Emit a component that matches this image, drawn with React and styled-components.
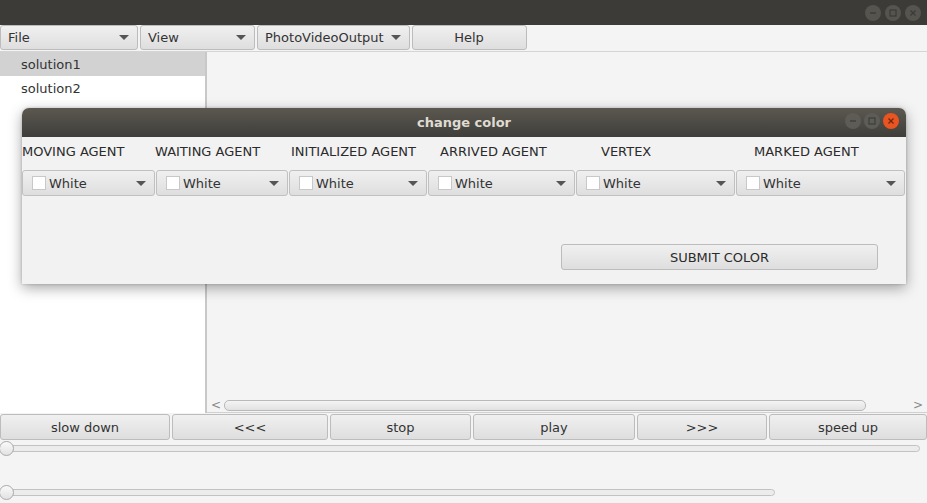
import React from "react";
import styled, { createGlobalStyle } from "styled-components";

const GlobalStyle = createGlobalStyle`
  html, body {
    margin: 0;
    padding: 0;
    overflow: hidden;
    background: #f4f4f4;
  }
  * { box-sizing: border-box; }
`;

const Window = styled.div`
  position: relative;
  width: 927px;
  height: 503px;
  display: flex;
  flex-direction: column;
  background: #f4f4f4;
  font-family: "DejaVu Sans", "Noto Sans", sans-serif;
  font-size: 13px;
  color: #333;
`;

const TitleBar = styled.div`
  height: 25px;
  flex: 0 0 25px;
  background: #3c3b37;
  display: flex;
  justify-content: flex-end;
  align-items: center;
  gap: 4px;
  padding-right: 6px;
`;

const CtrlBtn = styled.div`
  width: 16px;
  height: 16px;
  border-radius: 50%;
  background: ${(p) => (p.$close ? "#e95420" : p.$bg || "#5d5c57")};
  display: flex;
  align-items: center;
  justify-content: center;
`;

const MenuBar = styled.div`
  height: 27px;
  flex: 0 0 27px;
  display: flex;
  align-items: flex-end;
  gap: 2px;
  border-bottom: 1px solid #d4d4d4;
  padding-bottom: 1px;
`;

const MenuButton = styled.div`
  width: ${(p) => p.$w}px;
  height: 25px;
  display: flex;
  align-items: center;
  justify-content: ${(p) => (p.$center ? "center" : "space-between")};
  padding: 0 8px 0 7px;
  border: 1px solid #bcbcbc;
  border-radius: 3px;
  background: linear-gradient(#f0f0f0, #dedede);
  color: #333;
`;

const Arrow = styled.span`
  width: 0;
  height: 0;
  border-left: 5px solid transparent;
  border-right: 5px solid transparent;
  border-top: 5px solid #555;
`;

const Main = styled.div`
  flex: 0 0 361px;
  display: flex;
`;

const ListPane = styled.div`
  width: 207px;
  background: #fff;
  border-right: 2px solid #c8c8c8;
  display: flex;
  flex-direction: column;
`;

const ListItem = styled.div`
  height: 24px;
  display: flex;
  align-items: center;
  padding-left: 21px;
  background: ${(p) => (p.$selected ? "#d2d2d2" : "#fff")};
`;

const ViewPane = styled.div`
  flex: 1;
  display: flex;
  flex-direction: column;
  justify-content: flex-end;
  background: #f4f4f4;
`;

const HScroll = styled.div`
  height: 15px;
  display: flex;
  align-items: center;
  gap: 3px;
  padding: 0 4px 0 4px;
  color: #8a8a8a;
  font-size: 12px;
  border-bottom: 1px solid #d0d0d0;
`;

const ScrollThumb = styled.div`
  width: 642px;
  height: 11px;
  border: 1px solid #b9b9b9;
  border-radius: 5px;
  background: linear-gradient(#f4f4f4, #e2e2e2);
`;

const Spacer = styled.div`
  flex: 1;
`;

const ControlRow = styled.div`
  flex: 0 0 27px;
  display: flex;
  gap: 2px;
  padding-top: 1px;
`;

const CtrlButton = styled.div`
  width: ${(p) => p.$w}px;
  height: 26px;
  flex: ${(p) => (p.$grow ? 1 : "none")};
  display: flex;
  align-items: center;
  justify-content: center;
  border: 1px solid #bcbcbc;
  border-radius: 3px;
  background: linear-gradient(#f0f0f0, #dedede);
`;

const SliderArea = styled.div`
  flex: 1;
  display: flex;
  flex-direction: column;
  padding-top: 1px;
  gap: 29px;
`;

const Slider = styled.div`
  position: relative;
  width: ${(p) => p.$w}px;
  height: 15px;
  display: flex;
  align-items: center;
`;

const Track = styled.div`
  width: 100%;
  height: 7px;
  border: 1px solid #c2c2c2;
  border-radius: 4px;
  background: #ececec;
`;

const Thumb = styled.div`
  position: absolute;
  left: -1px;
  top: 0;
  width: 15px;
  height: 15px;
  border-radius: 50%;
  border: 1px solid #a9a9a9;
  background: linear-gradient(#fafafa, #e2e2e2);
`;

const Dialog = styled.div`
  position: absolute;
  left: 22px;
  top: 108px;
  width: 884px;
  height: 176px;
  display: flex;
  flex-direction: column;
  border-radius: 7px 7px 0 0;
  box-shadow: 0 4px 14px rgba(0, 0, 0, 0.35), 0 0 3px rgba(0, 0, 0, 0.2);
  background: #f2f2f2;
`;

const DialogTitle = styled.div`
  position: relative;
  height: 29px;
  flex: 0 0 29px;
  border-radius: 7px 7px 0 0;
  background: linear-gradient(#5b5850, #3f3e3a);
  display: flex;
  align-items: center;
  justify-content: center;
  color: #dfdbd2;
  font-weight: bold;
  font-size: 13px;
`;

const DialogCtrls = styled.div`
  position: absolute;
  right: 7px;
  top: 5px;
  display: flex;
  gap: 3px;
`;

const DialogBody = styled.div`
  flex: 1;
  display: flex;
  flex-direction: column;
`;

const LabelRow = styled.div`
  display: flex;
  height: 29px;
  align-items: center;
`;

const ColLabel = styled.div`
  width: ${(p) => p.$w}px;
  flex: none;
  white-space: nowrap;
  color: #2b2b2b;
`;

const ComboRow = styled.div`
  display: flex;
  gap: 1px;
  margin-top: 4px;
`;

const Combo = styled.div`
  width: ${(p) => p.$w}px;
  height: 26px;
  flex: none;
  display: flex;
  align-items: center;
  padding: 0 8px 0 9px;
  border: 1px solid #c0c0c0;
  border-radius: 3px;
  background: linear-gradient(#f0f0f0, #dedede);
`;

const Swatch = styled.span`
  width: 14px;
  height: 14px;
  background: #fff;
  border: 1px solid #c8c8c8;
  margin-right: 3px;
`;

const ComboText = styled.span`
  flex: 1;
`;

const SubmitWrap = styled.div`
  display: flex;
  justify-content: flex-end;
  padding: 48px 28px 0 0;
`;

const SubmitButton = styled.div`
  width: 317px;
  height: 26px;
  display: flex;
  align-items: center;
  justify-content: center;
  border: 1px solid #bcbcbc;
  border-radius: 3px;
  background: linear-gradient(#f0f0f0, #dedede);
  color: #2b2b2b;
`;

const MinIcon = ({ c }) => (
  <svg width="10" height="10" viewBox="0 0 10 10">
    <line x1="2" y1="5" x2="8" y2="5" stroke={c} strokeWidth="1.4" />
  </svg>
);
const MaxIcon = ({ c }) => (
  <svg width="10" height="10" viewBox="0 0 10 10">
    <rect x="2" y="2" width="6" height="6" fill="none" stroke={c} strokeWidth="1.2" />
  </svg>
);
const CloseIcon = ({ c }) => (
  <svg width="10" height="10" viewBox="0 0 10 10">
    <path d="M2.5 2.5 L7.5 7.5 M7.5 2.5 L2.5 7.5" stroke={c} strokeWidth="1.3" />
  </svg>
);

const labels = [
  ["MOVING AGENT", 133],
  ["WAITING AGENT", 136],
  ["INITIALIZED AGENT", 149],
  ["ARRIVED AGENT", 161],
  ["VERTEX", 153],
  ["MARKED AGENT", 130],
];

const combos = [133, 132, 138, 147, 159, 169];

const controls = [
  ["slow down", 170],
  ["<<<", 156],
  ["stop", 141],
  ["play", 162],
  [">>>", 130],
  ["speed up", 158],
];

export default function App() {
  return (
    <Window>
      <GlobalStyle />
      <TitleBar>
        <CtrlBtn $bg="#55544f"><MinIcon c="#3c3b37" /></CtrlBtn>
        <CtrlBtn $bg="#55544f"><MaxIcon c="#3c3b37" /></CtrlBtn>
        <CtrlBtn $bg="#55544f"><CloseIcon c="#3c3b37" /></CtrlBtn>
      </TitleBar>

      <MenuBar>
        <MenuButton $w={138}>File<Arrow /></MenuButton>
        <MenuButton $w={115}>View<Arrow /></MenuButton>
        <MenuButton $w={153}>PhotoVideoOutput<Arrow /></MenuButton>
        <MenuButton $w={115} $center>Help</MenuButton>
      </MenuBar>

      <Main>
        <ListPane>
          <ListItem $selected>solution1</ListItem>
          <ListItem>solution2</ListItem>
        </ListPane>
        <ViewPane>
          <HScroll>
            <span>&lt;</span>
            <ScrollThumb />
            <Spacer />
            <span>&gt;</span>
          </HScroll>
        </ViewPane>
      </Main>

      <ControlRow>
        {controls.map(([t, w], i) => (
          <CtrlButton key={t} $w={w} $grow={i === controls.length - 1}>
            {t}
          </CtrlButton>
        ))}
      </ControlRow>

      <SliderArea>
        <Slider $w={920}>
          <Track />
          <Thumb />
        </Slider>
        <Slider $w={775}>
          <Track />
          <Thumb />
        </Slider>
      </SliderArea>

      <Dialog>
        <DialogTitle>
          change color
          <DialogCtrls>
            <CtrlBtn><MinIcon c="#3f3e3a" /></CtrlBtn>
            <CtrlBtn><MaxIcon c="#3f3e3a" /></CtrlBtn>
            <CtrlBtn $close><CloseIcon c="#6b2a10" /></CtrlBtn>
          </DialogCtrls>
        </DialogTitle>
        <DialogBody>
          <LabelRow>
            {labels.map(([t, w]) => (
              <ColLabel key={t} $w={w}>{t}</ColLabel>
            ))}
          </LabelRow>
          <ComboRow>
            {combos.map((w, i) => (
              <Combo key={i} $w={w}>
                <Swatch />
                <ComboText>White</ComboText>
                <Arrow />
              </Combo>
            ))}
          </ComboRow>
          <SubmitWrap>
            <SubmitButton>SUBMIT COLOR</SubmitButton>
          </SubmitWrap>
        </DialogBody>
      </Dialog>
    </Window>
  );
}
